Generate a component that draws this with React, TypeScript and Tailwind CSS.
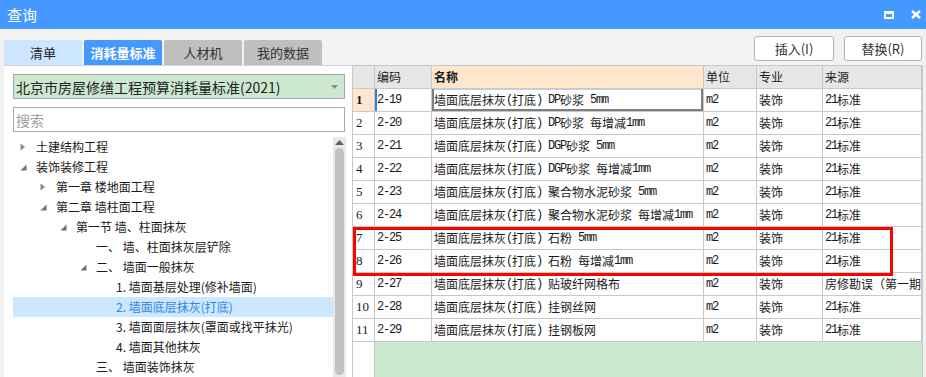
import React from "react";

const rows = [
  ["1", "2-19", "墙面底层抹灰(打底) DP砂浆 5mm", "m2", "装饰", "21标准"],
  ["2", "2-20", "墙面底层抹灰(打底) DP砂浆 每增减1mm", "m2", "装饰", "21标准"],
  ["3", "2-21", "墙面底层抹灰(打底) DGP砂浆 5mm", "m2", "装饰", "21标准"],
  ["4", "2-22", "墙面底层抹灰(打底) DGP砂浆 每增减1mm", "m2", "装饰", "21标准"],
  ["5", "2-23", "墙面底层抹灰(打底) 聚合物水泥砂浆 5mm", "m2", "装饰", "21标准"],
  ["6", "2-24", "墙面底层抹灰(打底) 聚合物水泥砂浆 每增减1mm", "m2", "装饰", "21标准"],
  ["7", "2-25", "墙面底层抹灰(打底) 石粉 5mm", "m2", "装饰", "21标准"],
  ["8", "2-26", "墙面底层抹灰(打底) 石粉 每增减1mm", "m2", "装饰", "21标准"],
  ["9", "2-27", "墙面底层抹灰(打底) 贴玻纤网格布", "m2", "装饰", "房修勘误（第一期"],
  ["10", "2-28", "墙面底层抹灰(打底) 挂钢丝网", "m2", "装饰", "21标准"],
  ["11", "2-29", "墙面底层抹灰(打底) 挂钢板网", "m2", "装饰", "21标准"],
];

type TreeItem = { text: string; level: number; arrow?: "right" | "down"; selected?: boolean };

const tree: TreeItem[] = [
  { text: "土建结构工程", level: 0, arrow: "right" },
  { text: "装饰装修工程", level: 0, arrow: "down" },
  { text: "第一章 楼地面工程", level: 1, arrow: "right" },
  { text: "第二章 墙柱面工程", level: 1, arrow: "down" },
  { text: "第一节 墙、柱面抹灰", level: 2, arrow: "down" },
  { text: "一、 墙、柱面抹灰层铲除", level: 3 },
  { text: "二、 墙面一般抹灰", level: 3, arrow: "down" },
  { text: "1. 墙面基层处理(修补墙面)", level: 4 },
  { text: "2. 墙面底层抹灰(打底)", level: 4, selected: true },
  { text: "3. 墙面面层抹灰(罩面或找平抹光)", level: 4 },
  { text: "4. 墙面其他抹灰", level: 4 },
  { text: "三、 墙面装饰抹灰", level: 3 },
];

function Mixed({ text }: { text: string }) {
  const parts = text.split(/([\x20-\x7e]+)/).filter(Boolean);
  return (
    <>
      {parts.map((p, i) =>
        /^[\x20-\x7e]+$/.test(p) ? (
          <span key={i} className="font-['Liberation_Mono',monospace] text-[12px] tracking-[-1.2px]">
            {p}
          </span>
        ) : (
          <span key={i}>{p}</span>
        )
      )}
    </>
  );
}

function Arrow({ dir }: { dir: "right" | "down" }) {
  if (dir === "right") {
    return (
      <svg width="6" height="8" viewBox="0 0 6 8">
        <path d="M0.5 0.5 L5 4 L0.5 7.5 Z" fill="#8a8a8a" />
      </svg>
    );
  }
  return (
    <svg width="7" height="7" viewBox="0 0 7 7">
      <path d="M6.5 0.5 L6.5 6.5 L0.5 6.5 Z" fill="#707070" />
    </svg>
  );
}

export default function App() {
  const cell = "h-[23px] border-r border-b border-[#c8c8c8] flex items-center overflow-hidden whitespace-pre";
  return (
    <div className="w-[926px] h-[377px] bg-[#f2f2f2] overflow-hidden flex flex-col font-['Noto_Sans_CJK_SC',sans-serif] text-[#1a1a1a]">
      {/* title bar */}
      <div className="h-[29px] bg-[#4499ff] flex items-center pl-[7px] pr-[3px] shrink-0">
        <span className="text-white text-[15px] leading-none">查询</span>
        <div className="flex-1" />
        <div className="w-[10px] h-[8px] border-white border-t-[3px] border-x-[2px] border-b-[2px] mr-[17px]" />
        <svg width="10" height="9" viewBox="0 0 10 9" className="mr-[2px]">
          <path d="M1 1 L9 8 M9 1 L1 8" stroke="#fff" strokeWidth="2.4" />
        </svg>
      </div>

      <div className="flex flex-1 min-h-0">
        {/* left column */}
        <div className="ml-[4px] w-[348px] flex flex-col">
          <div className="pt-[11px] flex gap-[2px] h-[36px]">
            <div className="w-[78px] h-[25px] bg-[#cce6ff] rounded-t-[2px] flex items-center justify-center text-[13px] text-[#222]">清单</div>
            <div className="w-[78px] h-[25px] bg-[#4499ff] rounded-t-[2px] flex items-center justify-center text-[13px] text-white font-bold">消耗量标准</div>
            <div className="w-[78px] h-[25px] bg-[#bfbfbf] rounded-t-[2px] flex items-center justify-center text-[13px] text-[#333]">人材机</div>
            <div className="w-[78px] h-[25px] bg-[#bfbfbf] rounded-t-[2px] flex items-center justify-center text-[13px] text-[#333]">我的数据</div>
          </div>
          <div className="flex-1 bg-white border-t border-[#d4d4d4] pl-[9px] pr-[2px] pt-[8px] flex flex-col">
            <div className="w-[332px] h-[25px] bg-[#cce8cf] border border-[#a8a8a8] flex items-center pl-[2px] pr-[6px]">
              <span className="text-[14px] text-[#222] flex-1 leading-none">北京市房屋修缮工程预算消耗量标准(2021)</span>
              <svg width="7" height="4" viewBox="0 0 7 4">
                <path d="M0 0 L7 0 L3.5 4 Z" fill="#8a8a8a" />
              </svg>
            </div>
            <div className="w-[332px] h-[25px] mt-[8px] bg-white border border-[#a9a9a9] flex items-center pl-[2px]">
              <span className="text-[14px] text-[#a0a0a0] leading-none">搜索</span>
            </div>
            <div className="mt-[5px] flex flex-1 min-h-0">
              <div className="w-[320px] flex flex-col">
                {tree.map((t, i) => (
                  <div
                    key={i}
                    className={`h-[20px] shrink-0 flex items-center text-[12px] ${t.selected ? "bg-[#cce8ff] text-[#2f86e8]" : "text-[#1a1a1a]"}`}
                  >
                    <div className="shrink-0" style={{ width: 7 + t.level * 20 }} />
                    <div className="w-[16px] shrink-0 flex items-center">{t.arrow ? <Arrow dir={t.arrow} /> : null}</div>
                    <span className="whitespace-pre leading-none">{t.text}</span>
                  </div>
                ))}
              </div>
              <div className="w-[13px] bg-[#e8e8e8] flex flex-col items-center">
                <svg width="9" height="5" viewBox="0 0 9 5" className="mt-[3px]">
                  <path d="M0 5 L4.5 0 L9 5 Z" fill="#606060" />
                </svg>
                <div className="mt-[3px] w-[9px] flex-1 mb-[2px] bg-[#c2c2c2] rounded-full" />
              </div>
            </div>
          </div>
        </div>

        {/* right column */}
        <div className="flex-1 flex flex-col min-w-0">
          <div className="pt-[7px] h-[36px] flex justify-end pr-[4px] gap-[10px]">
            <div className="w-[80px] h-[25px] bg-white border border-[#b4b4b4] rounded-[3px] flex items-center justify-center text-[13px] text-[#333]">插入(I)</div>
            <div className="w-[78px] h-[25px] bg-white border border-[#b4b4b4] rounded-[3px] flex items-center justify-center text-[13px] text-[#333]">替换(R)</div>
          </div>
          <div className="flex-1 w-[571px] border-t border-l border-r border-[#c8c8c8] relative flex flex-col bg-white">
            <div className="grid grid-cols-[22px_57px_272px_53px_66px_99px] text-[12px]">
              <div className={`${cell} bg-[#e6e6e6]`} />
              <div className={`${cell} bg-[#e6e6e6] pl-[2px]`}>编码</div>
              <div className={`${cell} bg-[#ffe6cc] pl-[2px] font-bold`}>名称</div>
              <div className={`${cell} bg-[#e6e6e6] pl-[2px]`}>单位</div>
              <div className={`${cell} bg-[#e6e6e6] pl-[2px]`}>专业</div>
              <div className={`${cell} bg-[#e6e6e6] pl-[2px]`}>来源</div>
              {rows.map((r, i) => (
                <React.Fragment key={i}>
                  <div
                    className={`${cell} pl-[3px] font-['Liberation_Serif',serif] text-[13px] ${i === 0 ? "bg-[#ffe6cc] font-bold" : "bg-white"}`}
                  >
                    {r[0]}
                  </div>
                  <div className={`${cell} pl-[2px] bg-white ${i === 0 ? "shadow-[inset_2px_0_0_#2f7fe8]" : ""}`}>
                    <Mixed text={r[1]} />
                  </div>
                  <div className={`${cell} pl-[2px] bg-white ${i === 0 ? "shadow-[inset_2px_0_0_#7f7f7f,inset_-2px_0_0_#7f7f7f,inset_0_-2px_0_#7f7f7f,inset_0_1px_0_#b8d4f0]" : ""}`}>
                    <Mixed text={r[2]} />
                  </div>
                  <div className={`${cell} pl-[2px] bg-white`}>
                    <Mixed text={r[3]} />
                  </div>
                  <div className={`${cell} pl-[2px] bg-white`}>{r[4]}</div>
                  <div className={`${cell} pl-[2px] bg-white`}>
                    <Mixed text={r[5]} />
                  </div>
                </React.Fragment>
              ))}
            </div>
            <div className="flex-1 flex">
              <div className="w-[22px] border-r border-[#c8c8c8] bg-white" />
              <div className="flex-1 bg-[#cce8cf]" />
            </div>
            <div className="absolute left-0 top-[161px] w-[540px] h-[49px] border-[3px] border-[#ff0000] pointer-events-none" />
          </div>
        </div>
      </div>
    </div>
  );
}
